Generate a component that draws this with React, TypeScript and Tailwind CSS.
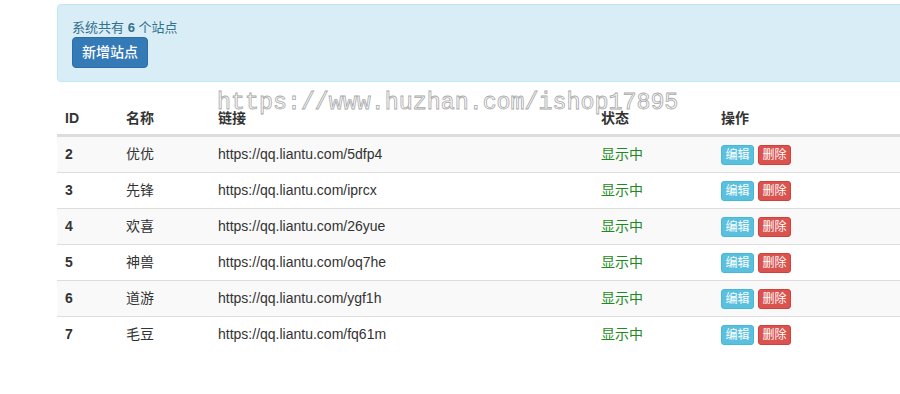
import React from 'react';

const sites = [
  { id: 2, name: '优优', url: 'https://qq.liantu.com/5dfp4' },
  { id: 3, name: '先锋', url: 'https://qq.liantu.com/iprcx' },
  { id: 4, name: '欢喜', url: 'https://qq.liantu.com/26yue' },
  { id: 5, name: '神兽', url: 'https://qq.liantu.com/oq7he' },
  { id: 6, name: '道游', url: 'https://qq.liantu.com/ygf1h' },
  { id: 7, name: '毛豆', url: 'https://qq.liantu.com/fq61m' },
];

export default function App() {
  return (
    <div
      className="relative w-[900px] h-[394px] overflow-hidden bg-white text-[14px] text-[#333]"
      style={{ fontFamily: '"Liberation Sans", Arial, "Noto Sans CJK SC", sans-serif' }}
    >
      <div className="w-[1100px] pl-[57px] pt-[4px]">
        {/* alert */}
        <div className="border border-[#bce8f1] bg-[#d9edf7] rounded-[4px] pl-[14px] pt-[13px] pb-[13px] text-[#31708f]">
          <div className="h-[19px] leading-[19px] text-[13px]">
            系统共有 <b>6</b> 个站点
          </div>
          <button className="h-[31px] w-[76px] rounded-[4px] bg-[#337ab7] border border-[#2e6da4] text-white text-[14px] font-medium">
            新增站点
          </button>
        </div>

        {/* table */}
        <div className="mt-[16px]">
          <div className="flex h-[38px] items-center pt-[4px] border-b-2 border-[#ddd] font-bold">
            <div className="w-[61px] pl-[8px]">ID</div>
            <div className="w-[92px] pl-[8px]">名称</div>
            <div className="w-[383px] pl-[8px]">链接</div>
            <div className="w-[120px] pl-[8px]">状态</div>
            <div className="pl-[8px]">操作</div>
          </div>
          {sites.map((s, i) => (
            <div
              key={s.id}
              className={`flex h-[36px] items-center border-t border-[#ddd] ${i % 2 === 0 ? 'bg-[#f9f9f9]' : 'bg-white'}`}
            >
              <div className="w-[61px] pl-[8px] font-bold">{s.id}</div>
              <div className="w-[92px] pl-[8px]">{s.name}</div>
              <div className="w-[383px] pl-[8px]">{s.url}</div>
              <div className="w-[120px] pl-[8px] text-[#1d8a1d]">显示中</div>
              <div className="flex gap-[4px] pl-[8px]">
                <span className="h-[20px] w-[33px] leading-[18px] text-center text-[12px] text-white rounded-[3px] bg-[#5bc0de] border border-[#46b8da]">
                  编辑
                </span>
                <span className="h-[20px] w-[33px] leading-[18px] text-center text-[12px] text-white rounded-[3px] bg-[#d9534f] border border-[#d43f3a]">
                  删除
                </span>
              </div>
            </div>
          ))}
        </div>
      </div>

      {/* watermark */}
      <div
        className="absolute left-[217px] top-[89px] text-[23.3px] leading-[28px] text-transparent [-webkit-text-stroke:0.8px_#a8a8a8] pointer-events-none"
        style={{ fontFamily: '"Liberation Mono", "Courier New", monospace' }}
      >
        https://www.huzhan.com/ishop17895
      </div>
    </div>
  );
}
